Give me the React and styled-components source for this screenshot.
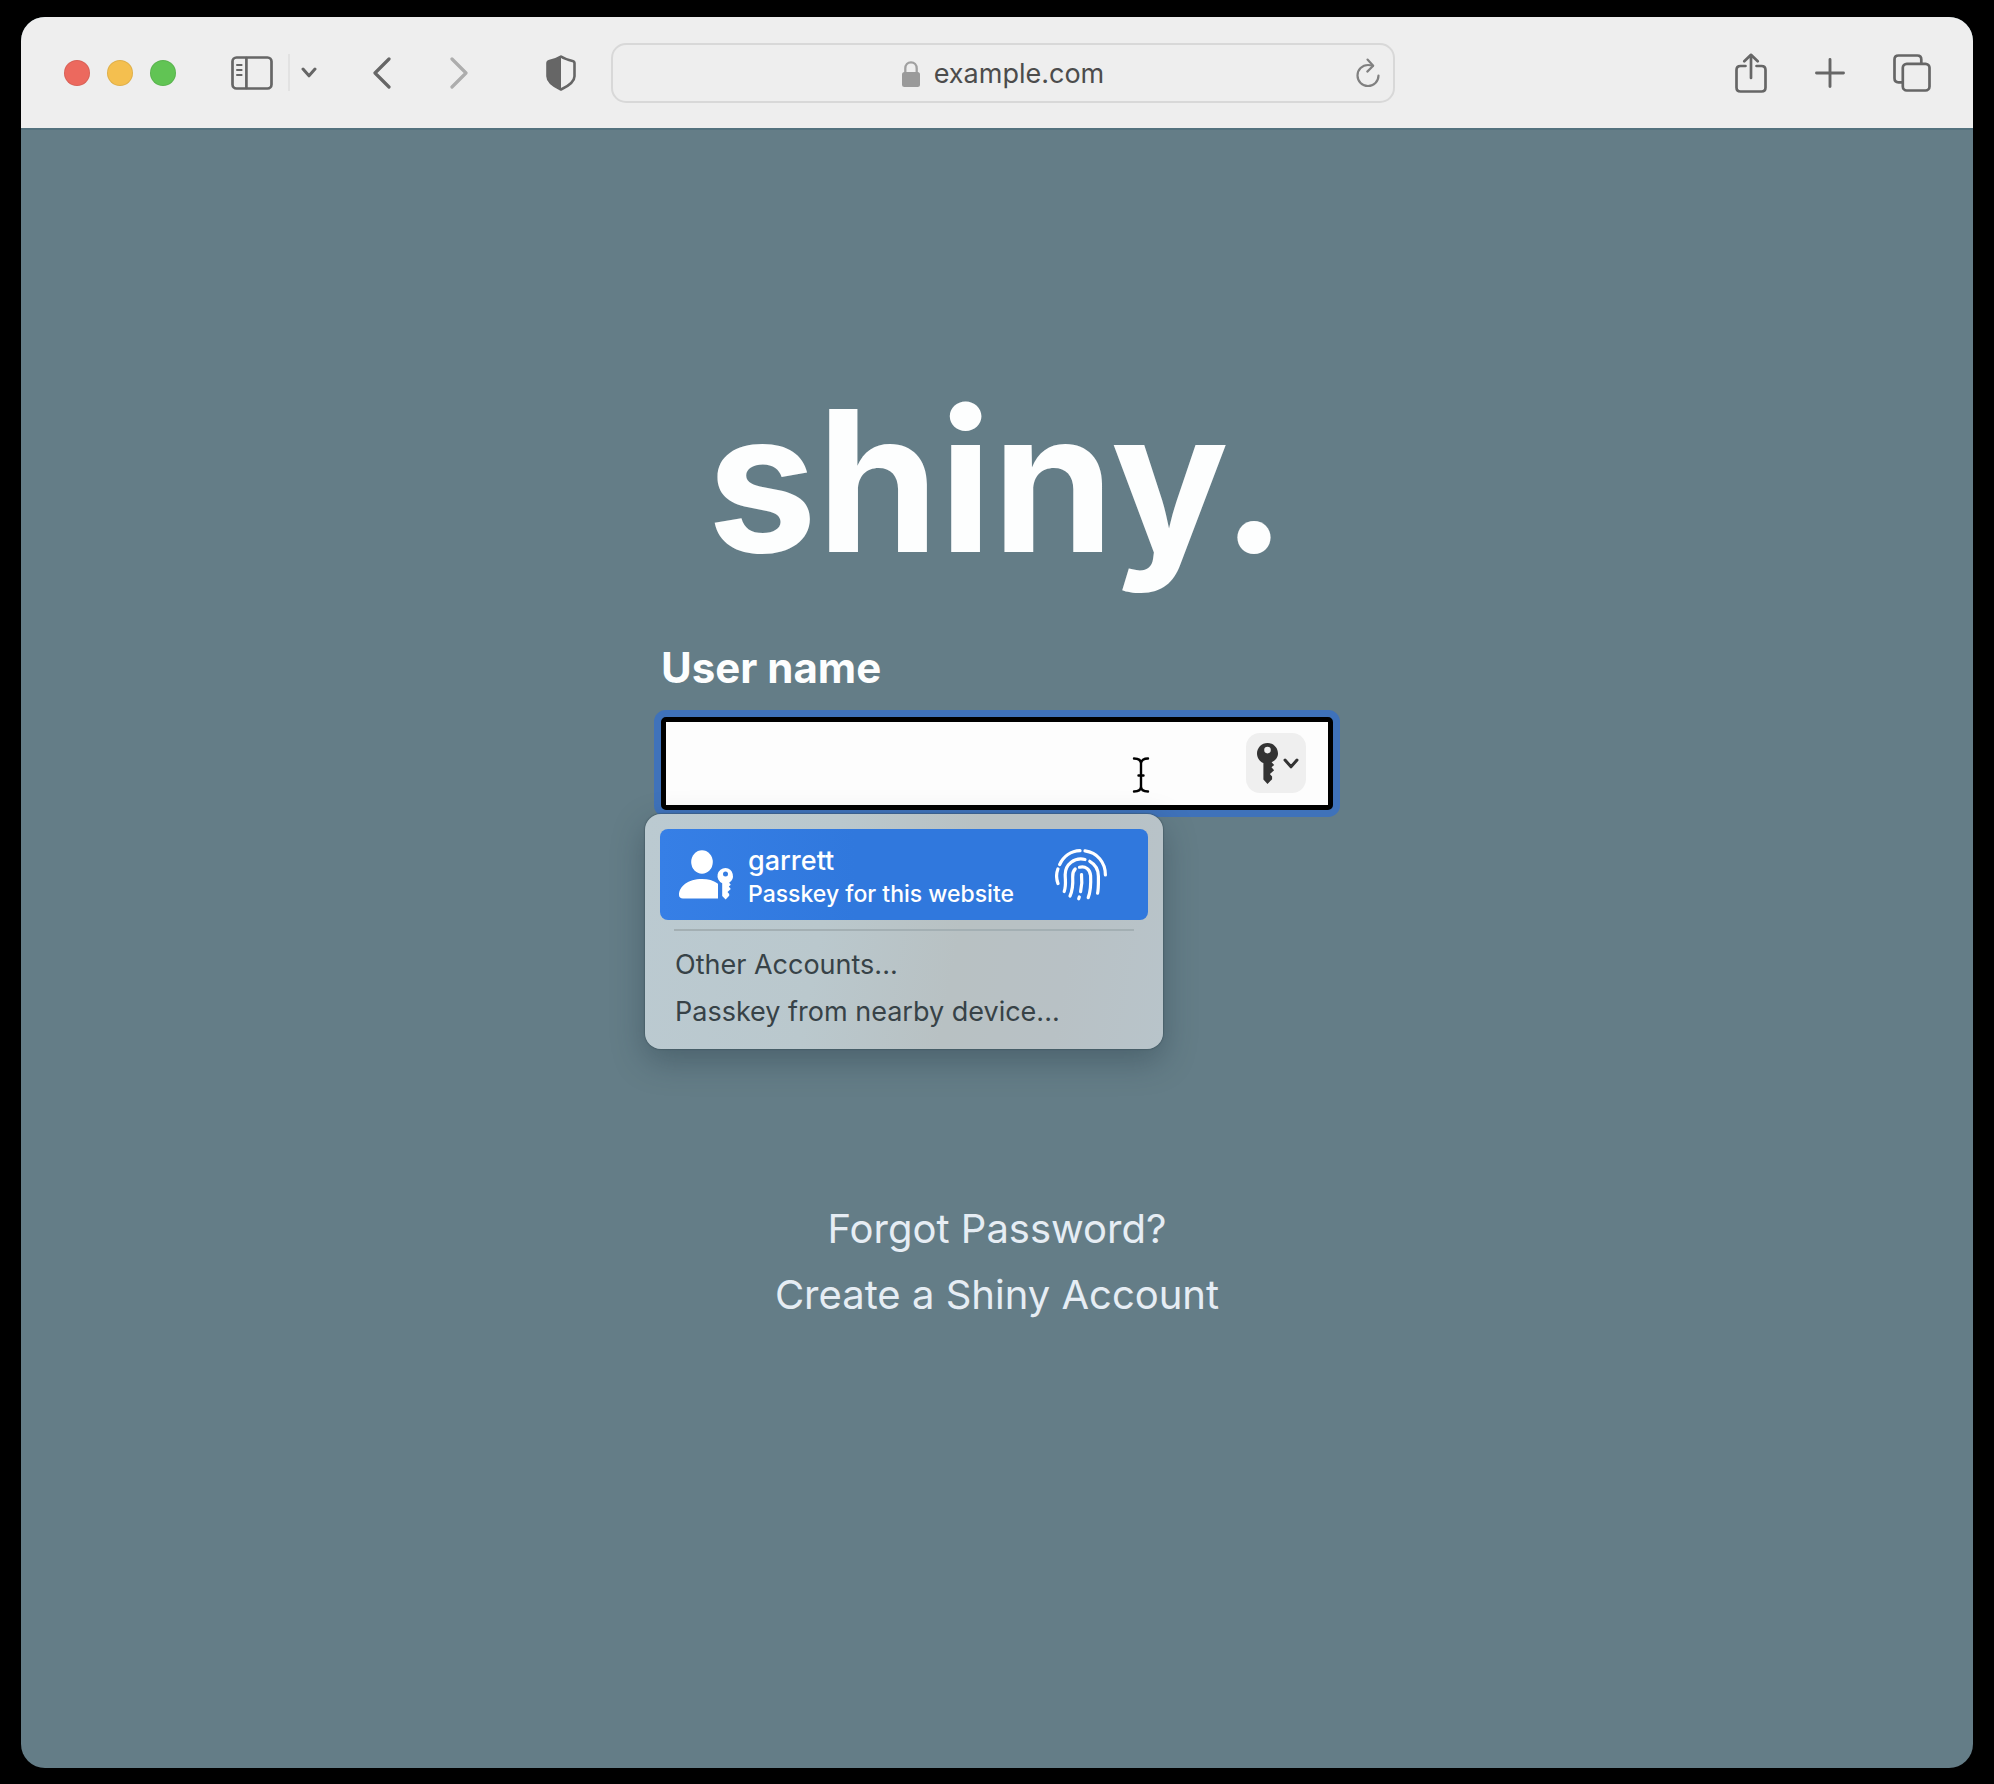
import React, { useState } from "react";
import styled, { createGlobalStyle } from "styled-components";

const GlobalStyle = createGlobalStyle`
  *, *::before, *::after { box-sizing: border-box; }
  body {
    margin: 0;
    background: #000;
    font-family: Inter, "Liberation Sans", sans-serif;
    -webkit-font-smoothing: antialiased;
  }
  button, input { font: inherit; }
`;

const Desktop = styled.div`
  display: flex;
  min-height: 100vh;
  padding: 17px 21px 16px;
`;

const BrowserWindow = styled.div`
  display: flex;
  flex: 1;
  flex-direction: column;
  overflow: hidden;
  border-radius: 24px;
  background: #647d87;
`;

const Toolbar = styled.header`
  display: flex;
  align-items: center;
  height: 113px;
  padding: 0 42px 0 43px;
  background: #eeeeee;
  border-bottom: 2px solid #54727e;
`;

const ToolbarSide = styled.div`
  display: flex;
  flex: none;
  align-items: center;
  gap: ${(p) => p.$gap || 0}px;
  margin-left: ${(p) => (p.$end ? "auto" : "0")};
`;

const Lights = styled.div`
  display: flex;
  gap: 17px;
  margin-right: 55px;
`;

const Light = styled.button`
  width: 26px;
  height: 26px;
  padding: 0;
  border: 1px solid rgba(0, 0, 0, 0.08);
  border-radius: 50%;
  background: ${(p) => p.$color};
`;

const IconButton = styled.button`
  display: flex;
  flex: none;
  padding: 0;
  border: 0;
  background: none;
  color: ${(p) => (p.$faint ? "#adadad" : "#666666")};
  margin-right: ${(p) => p.$after || 0}px;

  svg { display: block; }
`;

const Divider = styled.span`
  width: 2px;
  height: 37px;
  margin: 0 11px 0 15px;
  background: #e2e2e2;
`;

const AddressBar = styled.div`
  display: grid;
  flex: 1;
  grid-template-columns: 24px 1fr 24px;
  align-items: center;
  max-width: 784px;
  height: 60px;
  margin: 0 24px 0 35px;
  padding: 0 13px;
  border: 2px solid #d8d8d8;
  border-radius: 15px;
`;

const Address = styled.div`
  display: flex;
  grid-column: 2;
  align-items: center;
  justify-content: center;
  gap: 14px;
  padding-top: 2px;
  color: #4c4c4c;
  font-size: 27px;
  line-height: 36px;
`;

const Page = styled.main`
  display: flex;
  flex: 1;
  flex-direction: column;
  align-items: center;
  padding: 231px 24px 120px;
`;

const Brand = styled.h1`
  margin: 0;
  color: #fdfefe;
  font-size: 196px;
  font-weight: 700;
  line-height: 240px;
`;

const LoginForm = styled.form`
  width: 100%;
  max-width: 672px;
  margin-top: 39px;
`;

const FieldLabel = styled.label`
  display: block;
  margin-bottom: 21px;
  color: #fdfefe;
  font-size: 42px;
  font-weight: 700;
  line-height: 56px;
`;

const Field = styled.div`
  position: relative;
`;

const UserInput = styled.input`
  display: block;
  width: 100%;
  height: 93px;
  padding: 0 104px 0 16px;
  border: 5px solid #000;
  border-radius: 5px;
  outline: none;
  background: #fdfdfd;
  box-shadow: 0 0 0 7px #3f72ba;
  font-size: 42px;
`;

const PasskeyButton = styled.button`
  position: absolute;
  top: 16px;
  right: 27px;
  display: flex;
  align-items: center;
  justify-content: center;
  gap: 5px;
  width: 60px;
  height: 60px;
  padding: 0 0 0 4px;
  border: 0;
  border-radius: 14px;
  background: #efefef;
  color: #333333;
`;

const Pointer = styled.svg`
  position: absolute;
  top: 40px;
  right: 183px;
  pointer-events: none;
`;

const Popup = styled.div`
  position: absolute;
  top: 97px;
  left: -16px;
  display: flex;
  flex-direction: column;
  width: 518px;
  padding: 15px 15px 14px;
  border-radius: 16px;
  background: linear-gradient(100deg, #bbcad1 0%, #bac8cd 35%, #b8c1c3 60%, #b8c1c5 80%, #b8c4ca 100%);
  box-shadow: 0 0 1px 1px rgba(60, 80, 88, 0.45), 0 12px 32px rgba(30, 50, 60, 0.35);
`;

const AccountButton = styled.button`
  display: flex;
  align-items: center;
  height: 91px;
  padding: 0 41px 0 19px;
  border: 0;
  border-radius: 8px;
  background: linear-gradient(90deg, #367fe6, #3078dd 40%);
  color: #fff;
  text-align: left;
`;

const AccountText = styled.span`
  display: flex;
  flex: 1;
  flex-direction: column;
  margin-left: 13px;
  padding-top: 4px;
`;

const AccountName = styled.span`
  font-size: 27px;
  font-weight: 500;
  line-height: 34px;
`;

const AccountNote = styled.span`
  font-size: 23px;
  font-weight: 500;
  line-height: 32px;
`;

const Rule = styled.hr`
  width: calc(100% - 28px);
  height: 2px;
  margin: 9px 14px 10px;
  border: 0;
  background: #a3afb3;
`;

const PopupItem = styled.button`
  height: 47px;
  padding: 0 15px;
  border: 0;
  background: none;
  color: #374247;
  font-size: 27px;
  line-height: 47px;
  text-align: left;
`;

const Links = styled.nav`
  display: flex;
  flex-direction: column;
  align-items: center;
  margin-top: 386px;
`;

const PageLink = styled.a`
  color: #e6edf4;
  font-size: 40px;
  line-height: 66px;
  text-decoration: none;
`;

function ChevronDown() {
  return (
    <svg width="16" height="11" viewBox="0 0 16 11" fill="none" stroke="currentColor" strokeWidth="3" strokeLinecap="round" strokeLinejoin="round" aria-hidden="true">
      <path d="M2 2l6 6.8L14 2" />
    </svg>
  );
}

function SidebarIcon() {
  return (
    <svg width="42" height="34" viewBox="0 0 42 34" fill="none" stroke="currentColor" strokeWidth="2.7" strokeLinecap="round" aria-hidden="true">
      <rect x="1.5" y="1.5" width="39" height="31" rx="4" />
      <path d="M15.4 2v30" />
      <path d="M6 9h4.6M6 14h4.6M6 19h4.6" strokeWidth="2" />
    </svg>
  );
}

function ArrowIcon({ forward }) {
  return (
    <svg width="18" height="32" viewBox="0 0 18 32" fill="none" stroke="currentColor" strokeWidth="3.2" strokeLinecap="round" strokeLinejoin="round" aria-hidden="true">
      <path d={forward ? "M2 2l14 14L2 30" : "M16 2L2 16l14 14"} />
    </svg>
  );
}

function ShieldIcon() {
  return (
    <svg width="30" height="36" viewBox="0 0 30 36" fill="none" aria-hidden="true">
      <path d="M15 1.5c3 2 7 3.4 11.5 4.4 1.3.3 2 1 2 2.3v13c0 6-6 9.8-13.5 13.3C7.5 31 1.5 27.2 1.5 21.2v-13c0-1.3.7-2 2-2.3C8 4.9 12 3.5 15 1.5z" stroke="currentColor" strokeWidth="2.6" strokeLinejoin="round" />
      <path d="M15 1.5v33C7.5 31 1.5 27.2 1.5 21.2v-13c0-1.3.7-2 2-2.3C8 4.9 12 3.5 15 1.5z" fill="currentColor" />
    </svg>
  );
}

function LockIcon() {
  return (
    <svg width="18" height="26" viewBox="0 0 18 26" fill="none" aria-hidden="true">
      <path d="M3.3 13V7.5C3.3 3.8 5.7 1.3 9 1.3s5.7 2.5 5.7 6.2V13" stroke="#a0a0a0" strokeWidth="2.3" />
      <rect x="0" y="11" width="18" height="15" rx="2.5" fill="#9a9a9a" />
    </svg>
  );
}

function ReloadIcon() {
  return (
    <svg width="24" height="30" viewBox="0 0 24 30" fill="none" stroke="#808080" strokeWidth="2.2" strokeLinecap="round" strokeLinejoin="round" aria-hidden="true">
      <path d="M22.5 17.5A10.5 10.5 0 1 1 12 7c1.8 0 3.3.3 4.8.8" />
      <path d="M11.5 1.6l5.7 6.2-5.9 5.8" />
    </svg>
  );
}

function ShareIcon() {
  return (
    <svg width="32" height="40" viewBox="0 0 32 40" fill="none" stroke="currentColor" strokeWidth="2.7" strokeLinecap="round" strokeLinejoin="round" aria-hidden="true">
      <path d="M10.5 13H5.500c-2.600 0-4 1.400-4 4v17.500c0 2.600 1.400 4 4 4h21c2.600 0 4-1.400 4-4V17c0-2.600-1.400-4-4-4h-5" />
      <path d="M16 25V2M9.3 8.3L16 1.8l6.7 6.5" />
    </svg>
  );
}

function PlusIcon() {
  return (
    <svg width="30" height="30" viewBox="0 0 30 30" stroke="currentColor" strokeWidth="2.9" strokeLinecap="round" aria-hidden="true">
      <path d="M15 1.5v27M1.5 15h27" />
    </svg>
  );
}

function TabsIcon() {
  return (
    <svg width="38" height="38" viewBox="0 0 38 38" fill="none" stroke="currentColor" strokeWidth="2.7" strokeLinejoin="round" aria-hidden="true">
      <path d="M9.5 28.3H5.5c-2.6 0-4-1.4-4-4V5.5c0-2.6 1.4-4 4-4h18.8c2.6 0 4 1.4 4 4v4" />
      <rect x="9.8" y="9.8" width="26.7" height="26.7" rx="4" />
    </svg>
  );
}

function KeyIcon() {
  return (
    <svg width="21" height="41" viewBox="0 0 21 41" aria-hidden="true">
      <path
        fill="currentColor"
        fillRule="evenodd"
        d="M10.5 0C4.7 0 0 4.7 0 10.5c0 4.3 2.6 8 6.4 9.6v16.500l4.100 4.400 4.600-4.800v-2.600l-2.200-2.500 4.200-3.900-2.600-3 2.700-2.300-2.600-2.700C18.400 17.600 21 14.500 21 10.500 21 4.700 16.300 0 10.500 0zm0 3.800a3.300 3.300 0 1 1 0 6.600 3.300 3.300 0 0 1 0-6.600z"
      />
    </svg>
  );
}

function PersonKeyIcon() {
  return (
    <svg width="56" height="50" viewBox="0 0 56 50" fill="#fff" aria-hidden="true">
      <ellipse cx="23" cy="12" rx="10.8" ry="11.8" />
      <path d="M4 48.500c-2.500 0-4-1.200-4-3.500C0 36.500 9 29 23 29c6.300 0 11.500 1.500 15.300 4.200.5.300.7.700.7 1.200v14.100z" />
      <path
        fillRule="evenodd"
        d="M46.500 18a8 8 0 0 0-3.300 15.300v12.600l3.400 3.600 3.600-3.700v-1.900l-1.700-2 3.300-3-2-2.300 2-1.800-1.700-2A8 8 0 0 0 46.500 18zm0 3.600a2.500 2.500 0 1 1 0 5 2.500 2.500 0 0 1 0-5z"
      />
    </svg>
  );
}

function FingerprintIcon() {
  return (
    <svg width="52" height="52" viewBox="0 0 52 52" fill="none" stroke="#fff" strokeWidth="3.2" strokeLinecap="round" aria-hidden="true">
      <path d="M4.700 15.500C8.500 7.300 16 1.900 25 1.600" />
      <path d="M30 1.900C42 3.500 50.400 13 50.400 26" />
      <path d="M2.900 20C1.200 24.500 1.300 30 3 34.600" />
      <path d="M30 10.500C19.500 8 10.200 15.600 10.200 25.500c0 6 1.200 10.500-1 17" />
      <path d="M34.800 12.300c5.600 3.200 8.600 8.200 8.600 14.900 0 6.500.3 11.500-.8 17" />
      <path d="M20.200 20c-2 2-2.700 4.500-2.500 8 .4 7.500.3 12.500-2.700 19" />
      <path d="M24.500 18.200c5.800-1.700 10.700 2.100 11.100 8.500.4 8 .2 15.300-2.400 22" />
      <path d="M26.500 25.500c.7 6 .5 11.500-.9 17.200" />
      <path d="M24.300 48l-.6 1.800" />
    </svg>
  );
}

export default function App() {
  const [name, setName] = useState("");

  return (
    <>
      <GlobalStyle />
      <Desktop>
        <BrowserWindow>
          <Toolbar>
            <ToolbarSide>
              <Lights>
                <Light $color="#ec695e" aria-label="Close" />
                <Light $color="#f4bf4f" aria-label="Minimize" />
                <Light $color="#61c454" aria-label="Zoom" />
              </Lights>
              <IconButton aria-label="Sidebar"><SidebarIcon /></IconButton>
              <Divider />
              <IconButton aria-label="Tab groups" $after={56}><ChevronDown /></IconButton>
              <IconButton aria-label="Back" $after={59}><ArrowIcon /></IconButton>
              <IconButton aria-label="Forward" $faint $after={78}><ArrowIcon forward /></IconButton>
              <IconButton aria-label="Privacy report"><ShieldIcon /></IconButton>
            </ToolbarSide>
            <AddressBar>
              <Address>
                <LockIcon />
                <span>example.com</span>
              </Address>
              <IconButton aria-label="Reload"><ReloadIcon /></IconButton>
            </AddressBar>
            <ToolbarSide $end $gap={48}>
              <IconButton aria-label="Share"><ShareIcon /></IconButton>
              <IconButton aria-label="New tab"><PlusIcon /></IconButton>
              <IconButton aria-label="Tab overview"><TabsIcon /></IconButton>
            </ToolbarSide>
          </Toolbar>
          <Page>
            <Brand>shiny.</Brand>
            <LoginForm onSubmit={(e) => e.preventDefault()}>
              <FieldLabel htmlFor="username">User name</FieldLabel>
              <Field>
                <UserInput id="username" type="text" autoComplete="username webauthn" value={name} onChange={(e) => setName(e.target.value)} />
                <PasskeyButton type="button" aria-label="Passkeys">
                  <KeyIcon />
                  <ChevronDown />
                </PasskeyButton>
                <Pointer width="18" height="36" viewBox="0 0 18 36" fill="none" stroke="#000" strokeWidth="2.4" strokeLinecap="round" aria-hidden="true">
                  <path d="M2 1.5c4 0 7 1.7 7 5 0-3.3 3-5 7-5M9 6v24M2 34.500c4 0 7-1.700 7-5 0 3.300 3 5 7 5M6.500 18.500h5" />
                </Pointer>
                <Popup>
                  <AccountButton type="button">
                    <PersonKeyIcon />
                    <AccountText>
                      <AccountName>garrett</AccountName>
                      <AccountNote>Passkey for this website</AccountNote>
                    </AccountText>
                    <FingerprintIcon />
                  </AccountButton>
                  <Rule />
                  <PopupItem type="button">Other Accounts...</PopupItem>
                  <PopupItem type="button">Passkey from nearby device...</PopupItem>
                </Popup>
              </Field>
            </LoginForm>
            <Links>
              <PageLink href="#forgot">Forgot Password?</PageLink>
              <PageLink href="#create">Create a Shiny Account</PageLink>
            </Links>
          </Page>
        </BrowserWindow>
      </Desktop>
    </>
  );
}
